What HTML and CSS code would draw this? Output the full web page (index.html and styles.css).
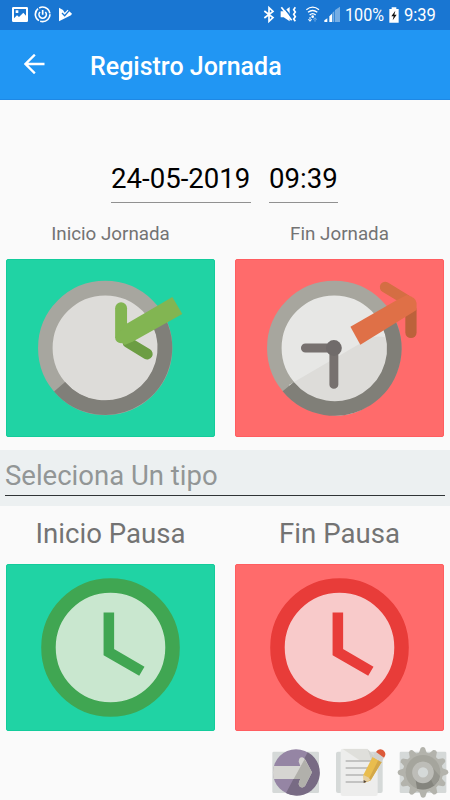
FILE: index.html
```html
<!DOCTYPE html>
<html lang="es">
<head>
    <meta charset="UTF-8">
    <meta name="viewport" content="width=device-width, initial-scale=1.0">
    <title>Registro Jornada</title>
    <link rel="stylesheet" href="styles.css">
</head>
<body>

<div class="status-bar">
    <svg class="status-left" viewBox="0 0 225 90">
        <path fill="#fff" fill-rule="evenodd" d="M40 21h40q4 0 4 4v37q0 4-4 4H40q-4 0-4-4V25q0-4 4-4zM42 27v28l9-9 6 5 13-13 8 9V27zM47 31h8v8h-8z"/>
        <circle cx="128" cy="43" r="22" fill="none" stroke="#fff" stroke-width="5" stroke-dasharray="42 4"/>
        <path d="M120 36a11 11 0 1 0 16 0M128 30v14" fill="none" stroke="#fff" stroke-width="5"/>
        <path d="M177 23l12 7 5 8 9-9 13 12-3 5-36 18z" fill="#fff"/>
        <path d="M186 39l8 8 17-19" fill="none" stroke="#1976d2" stroke-width="4"/>
    </svg>
    <div class="status-right">
        <svg class="status-icons" viewBox="110 0 240 90">
            <path d="M117 33l26 20-12 11V23l12 11-26 20" fill="none" stroke="#fff" stroke-width="5"/>
            <path d="M166 34h9l18-13v43l-18-12h-9z" fill="#fff"/>
            <path d="M172 18l30 38" stroke="#1976d2" stroke-width="5"/>
            <path d="M168 22l31 39" stroke="#fff" stroke-width="5"/>
            <path d="M210 22l-5 7 5 7-5 7 5 7-5 7 5 7" fill="none" stroke="#fff" stroke-width="5"/>
            <path d="M243 29q19-15 38 0M248 37q14-11 28 0M253 45q9-8 18 0" fill="none" stroke="#fff" stroke-width="4"/>
            <circle cx="262" cy="50" r="4" fill="#fff"/>
            <path d="M254 51v12m-5-5l5 6 5-6" fill="none" stroke="#fff" stroke-width="3"/>
            <path d="M269 65V54m-5 5l5-6 5 6" fill="none" stroke="#75ade4" stroke-width="3"/>
            <path d="M297 66v-5l9-6v11zM312 66V49l8-8v25z" fill="#fff"/>
            <path d="M321 66V39l6-6v33zM329 66V30l15-10v46z" fill="#75ade4"/>
        </svg>
        <span class="battery-text">100%</span>
        <svg class="battery" viewBox="0 0 30 48">
            <path d="M8 1h14v5h7v41H1V6h7z" fill="#fff"/>
            <path d="M19 11L7 28h7l-3 12 12-17h-7z" fill="#111"/>
        </svg>
        <span class="clock-text">9:39</span>
    </div>
</div>

<div class="toolbar">
    <svg class="back" viewBox="0 0 60 60">
        <path d="M60 30H4M31 2L3 30l28 28" fill="none" stroke="#fff" stroke-width="7"/>
    </svg>
    <h1>Registro Jornada</h1>
</div>

<div class="datetime">
    <span class="field date">24-05-2019</span>
    <span class="field time">09:39</span>
</div>

<div class="columns labels">
    <span>Inicio Jornada</span>
    <span>Fin Jornada</span>
</div>

<div class="columns jornada">
    <button class="tile green">
        <svg viewBox="19 13 626 532">
            <circle cx="316" cy="279" r="181" fill="#dddcd9" stroke="#a7a69f" stroke-width="44"/>
            <path d="M178 396A181 181 0 0 0 480 203" fill="none" stroke="#807f79" stroke-width="44"/>
            <path d="M385 262L443 297" stroke="#6c9d43" stroke-width="33" stroke-linecap="round"/>
            <path d="M364 159V247" stroke="#82b552" stroke-width="36" stroke-linecap="round"/>
            <path d="M346 247L382 205 519 125 549 176 400 259 375 270z" fill="#82b552"/>
        </svg>
    </button>
    <button class="tile red">
        <svg viewBox="30 13 626 532">
            <circle cx="327" cy="279" r="181" fill="#e7e7e5" stroke="#a7a69e" stroke-width="44"/>
            <path d="M190 391A160 160 0 0 0 484 248Q458 239 430 251z" fill="#dddcd9"/>
            <path d="M188 396A181 181 0 0 0 491 203" fill="none" stroke="#807f78" stroke-width="44"/>
            <path d="M240 279H326V389" fill="none" stroke="#77716f" stroke-width="27" stroke-linecap="round"/>
            <circle cx="326" cy="279" r="24" fill="#706b6a"/>
            <path d="M559 165V232" stroke="#bc623b" stroke-width="34" stroke-linecap="round"/>
            <path d="M481 95L545 134" stroke="#d46e43" stroke-width="32" stroke-linecap="round"/>
            <path d="M376 215L518 133 547 119Q575 127 576 143V164L406 269z" fill="#df7047"/>
        </svg>
    </button>
</div>

<div class="selector">
    <div class="selector-text">Seleciona Un tipo</div>
</div>

<div class="columns labels big">
    <span>Inicio Pausa</span>
    <span>Fin Pausa</span>
</div>

<div class="columns pausa">
    <button class="tile green">
        <svg viewBox="19 19 626 500">
            <circle cx="332" cy="269" r="188" fill="#c9e7cf" stroke="#40a652" stroke-width="44"/>
            <path d="M327 163V283L427 341" fill="none" stroke="#40a652" stroke-width="32"/>
        </svg>
    </button>
    <button class="tile red">
        <svg viewBox="30 19 626 500">
            <circle cx="343" cy="269" r="188" fill="#f8caca" stroke="#e83c39" stroke-width="44"/>
            <path d="M338 163V283L438 341" fill="none" stroke="#e83c39" stroke-width="32"/>
        </svg>
    </button>
</div>

<div class="actions">
    <svg class="action" viewBox="33 33 156 162">
        <rect x="37" y="50" width="140" height="124" rx="4" fill="#d5d9d8"/>
        <circle cx="108" cy="112" r="69" fill="#9585a4"/>
        <path d="M143 52A69 69 0 0 1 78 174z" fill="#786b84"/>
        <path d="M41 93H121L116 80Q117 66 127 67 133 68 137 76L156 112 135 153Q129 160 121 156 113 151 118 139L121 132H41Q37 112 41 93z" fill="#d6d5d2"/>
        <path d="M134 72L156 112 135 153Q129 160 121 156 113 151 118 139L121 132H101z" fill="#b1b0ab"/>
    </svg>
    <svg class="action" viewBox="223 33 156 162">
        <rect x="229" y="50" width="140" height="124" rx="6" fill="#d5d9d8"/>
        <path d="M249 41H323L354 72V177Q354 183 348 183H249Q243 183 243 177V47Q243 41 249 41z" fill="#ededec"/>
        <path d="M249 42H323L335 77H302z" fill="#dfdfdb"/>
        <path d="M323 42L354 73 335 77z" fill="#d0d1cc"/>
        <path d="M258 78H337M258 99H337M258 120H320M258 141H315" stroke="#b5b5b4" stroke-width="4"/>
        <path d="M339 65L366 81 333 136 313 144 311 120z" fill="#e9bd4e"/>
        <path d="M356 75L366 81 333 136 323 140z" fill="#d3a748"/>
        <path d="M311 120L313 144 333 135 326 127z" fill="#e6cf9e"/>
        <path d="M312 135V144L321 140z" fill="#50433b"/>
        <path d="M346 52L373 68 365 81 339 66z" fill="#d1d1ce"/>
        <path d="M349 51Q356 39 370 45 383 55 373 68z" fill="#dc5a39"/>
    </svg>
    <svg class="action" viewBox="410 33 156 162">
        <rect x="418" y="50" width="140" height="124" rx="4" fill="#d5d9d8"/>
        <g fill="#b3b3ac">
            <path id="tooth" d="M475 56L481 39Q488 33 494 39L500 56z"/>
            <use href="#tooth" transform="rotate(30 488 112)"/>
            <use href="#tooth" transform="rotate(60 488 112)"/>
            <use href="#tooth" transform="rotate(90 488 112)"/>
            <use href="#tooth" transform="rotate(120 488 112)"/>
            <use href="#tooth" transform="rotate(150 488 112)"/>
            <use href="#tooth" transform="rotate(180 488 112)"/>
            <use href="#tooth" transform="rotate(210 488 112)"/>
            <use href="#tooth" transform="rotate(240 488 112)"/>
            <use href="#tooth" transform="rotate(270 488 112)"/>
            <use href="#tooth" transform="rotate(300 488 112)"/>
            <use href="#tooth" transform="rotate(330 488 112)"/>
        </g>
        <circle cx="488" cy="112" r="60" fill="#b3b3ac"/>
        <circle cx="488" cy="112" r="52" fill="#a5a59d"/>
        <path d="M466 136L470 161Q500 168 521 152L536 134 514 96z" fill="#85857e"/>
        <path d="M521 152Q536 139 539 124L515 96 510 130z" fill="#96968f"/>
        <circle cx="488" cy="112" r="24" fill="#d5d9d8" stroke="#bdbdb8" stroke-width="17"/>
    </svg>
</div>

</body>
</html>
```

FILE: styles.css
```css
* {
    box-sizing: border-box;
}

body {
    margin: 0;
    height: 800px;
    overflow: hidden;
    background-color: #fafafa;
    font-family: Roboto, sans-serif;
    color: #737373;
}

svg {
    display: block;
    flex-shrink: 0;
}

.status-bar {
    display: flex;
    justify-content: space-between;
    height: 30px;
    padding-right: 14px;
    background-color: #1976d2;
    color: #fff;
    line-height: 30px;
}

.status-left {
    width: 75px;
    height: 30px;
}

.status-right {
    display: flex;
    align-items: center;
}

.status-icons {
    width: 80px;
    height: 30px;
}

.battery-text {
    width: 42px;
    margin-left: 3px;
    font-size: 19px;
    transform: scaleX(0.85);
    transform-origin: left;
}

.battery {
    width: 10px;
    height: 16px;
    margin-left: 2px;
}

.clock-text {
    width: 32px;
    margin-left: 5px;
    font-size: 19px;
    transform: scaleX(0.87);
    transform-origin: left;
}

.toolbar {
    display: flex;
    align-items: center;
    height: 70px;
    padding: 3px 24px 0;
    background-color: #2196f3;
    border-bottom: 1px solid #1e88e5;
    color: #fff;
}

.back {
    width: 21px;
    height: 20px;
    margin-top: -4px;
}

h1 {
    margin: 0 0 0 45px;
    font-size: 25px;
    font-weight: 500;
}

.datetime {
    display: flex;
    justify-content: space-between;
    width: 227px;
    margin: 60px 0 0 111px;
    color: #000;
    font-size: 27.6px;
    line-height: 37px;
}

.field {
    height: 43px;
    border-bottom: 1px solid #909090;
    white-space: nowrap;
}

.date {
    width: 140px;
}

.time {
    width: 69px;
}

.columns {
    display: grid;
    grid-template-columns: 209px 209px;
    column-gap: 20px;
    padding: 0 6px;
}

.labels {
    height: 56px;
    padding-top: 16px;
    font-size: 18.8px;
    line-height: 30px;
    text-align: center;
}

.big {
    height: 58px;
    padding-top: 12px;
    font-size: 27.6px;
    line-height: 32px;
}

.tile {
    padding: 0;
    border: 1px solid;
    border-radius: 2px;
    overflow: hidden;
}

.tile svg {
    width: 209px;
    height: 100%;
    margin: 0 -1px;
}

.green {
    background-color: #20d3a4;
    border-color: #13cc9b;
}

.red {
    background-color: #ff6b6b;
    border-color: #ff5d60;
}

.jornada .tile {
    height: 178px;
}

.pausa .tile {
    height: 167px;
}

.selector {
    height: 56px;
    margin-top: 13px;
    padding: 0 5px;
    background-color: #ecf0f1;
}

.selector-text {
    height: 46px;
    border-bottom: 1px solid #2f3436;
    color: #929696;
    font-size: 27.5px;
    line-height: 52px;
}

.actions {
    display: flex;
    justify-content: flex-end;
    gap: 11px;
    margin-top: 15px;
    padding-right: 1px;
}

.action {
    width: 52px;
    height: 54px;
}
```
